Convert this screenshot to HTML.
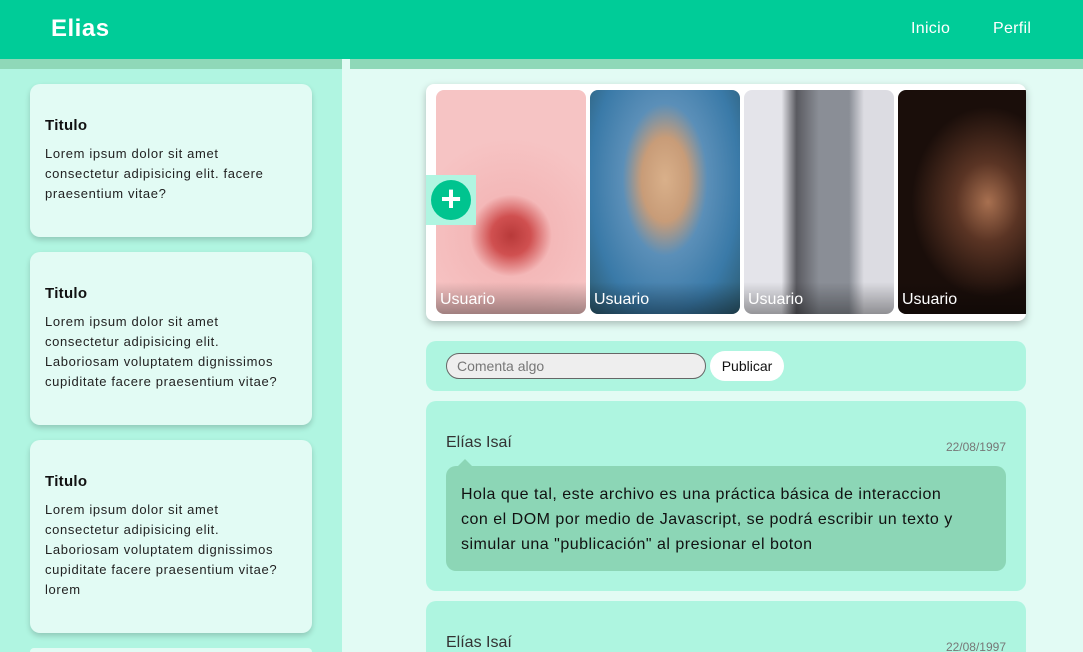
<!DOCTYPE html>
<html style="height:652px;overflow:hidden"><head><meta charset="utf-8"><style>
*{margin:0;padding:0;box-sizing:border-box}
body{width:1083px;height:652px;overflow:hidden;background:#e2fbf4;font-family:"Liberation Sans",sans-serif;position:relative;color:#111}
.hdr{position:absolute;left:0;top:0;width:1083px;height:59px;background:#00cc98}
.logo{position:absolute;left:51px;top:15px;color:#fff;font-weight:bold;font-size:24px;letter-spacing:.5px}
.nav{position:absolute;top:20px;color:#fff;font-size:16px;letter-spacing:.3px}
.strip{position:absolute;top:59px;height:10px;background:#8fd8b8}
.side{position:absolute;left:0;top:69px;width:342px;height:583px;background:#b0f5e1}
.card{position:absolute;left:30px;width:282px;background:#e2fbf4;border-radius:10px;box-shadow:0 3px 6px rgba(0,0,0,.18);padding:0 15px}
.card h3{font-size:15px;font-weight:bold;margin-bottom:10px;letter-spacing:.3px}
.card p{font-size:13px;line-height:20px;color:#222;letter-spacing:.65px;white-space:nowrap}
.stories{position:absolute;left:426px;top:84px;width:600px;height:237px;background:#fff;border-radius:8px;box-shadow:0 3px 8px rgba(0,0,0,.25);overflow:hidden}
.st{position:absolute;top:6px;height:224px;width:150px;border-radius:8px;overflow:hidden}
.st span{position:absolute;left:0;right:0;bottom:0;height:32px;background:linear-gradient(transparent,rgba(0,0,0,.35));color:#fff;font-size:16px;padding:9px 4px 0}
.plus{position:absolute;left:0;top:91px;width:50px;height:50px;background:#b0f5e1}
.plus div{position:absolute;left:5px;top:5px;width:40px;height:40px;border-radius:50%;background:#00c48f;color:#fff;font-size:36px;line-height:38px;text-align:center;font-weight:bold}
.bar{position:absolute;left:426px;top:341px;width:600px;height:50px;background:#aef5e0;border-radius:10px}
.inp{position:absolute;left:20px;top:12px;width:260px;height:26px;border:1px solid #666;border-radius:13px;background:#eee;color:#777;font-size:14px;padding:4px 10px}
.btn{position:absolute;left:284px;top:10px;width:74px;height:30px;border-radius:15px;background:#fff;font-size:14px;text-align:center;line-height:30px}
.post{position:absolute;left:426px;width:600px;background:#aef5e0;border-radius:10px}
.name{position:absolute;left:20px;top:33px;font-size:16px;color:#333}
.date{position:absolute;right:20px;top:39px;font-size:12px;color:#777}
.bub{position:absolute;left:20px;top:65px;width:560px;height:105px;background:#8cd6b6;border-radius:10px;padding:16px 15px;font-size:16px;line-height:25px;color:#111;letter-spacing:.5px;white-space:nowrap}
.bub:before{content:"";position:absolute;left:12px;top:-7px;border:7px solid transparent;border-top:0;border-bottom-color:#8cd6b6}
</style></head><body>
<div class="hdr"><div class="logo">Elias</div><div class="nav" style="left:911px">Inicio</div><div class="nav" style="left:993px">Perfil</div></div>
<div class="strip" style="left:0;width:342px"></div>
<div class="strip" style="left:350px;width:733px"></div>
<div class="side"></div>
<div class="card" style="top:84px;height:153px;padding-top:33px"><h3>Titulo</h3><p>Lorem ipsum dolor sit amet<br>consectetur adipisicing elit. facere<br>praesentium vitae?</p></div>
<div class="card" style="top:252px;height:173px;padding-top:33px"><h3>Titulo</h3><p>Lorem ipsum dolor sit amet<br>consectetur adipisicing elit.<br>Laboriosam voluptatem dignissimos<br>cupiditate facere praesentium vitae?</p></div>
<div class="card" style="top:440px;height:193px;padding-top:33px"><h3>Titulo</h3><p>Lorem ipsum dolor sit amet<br>consectetur adipisicing elit.<br>Laboriosam voluptatem dignissimos<br>cupiditate facere praesentium vitae?<br>lorem</p></div>
<div class="card" style="top:648px;height:4px;border-radius:10px 10px 0 0;box-shadow:none"></div>
<div class="stories">
<div class="st" style="left:10px;background:radial-gradient(circle at 50% 65%,#b83a3a 0,#d05050 12%,#f4b8b8 25%,#f6c4c4 60%)"><span>Usuario</span></div>
<div class="st" style="left:164px;background:radial-gradient(ellipse at 50% 40%,#d9b08a 0,#c89c78 22%,#5b8fb8 40%,#3a7aa8 70%,#2c5a6e 100%)"><span>Usuario</span></div>
<div class="st" style="left:318px;background:linear-gradient(90deg,#e4e4ea 0,#e4e4ea 25%,#5a5a60 35%,#8a8e96 50%,#8a8e96 70%,#dcdce2 80%)"><span>Usuario</span></div>
<div class="st" style="left:472px;width:150px;background:radial-gradient(ellipse at 60% 50%,#a87050 0,#5a3424 25%,#1a0e0a 60%)"><span>Usuario</span></div>
<div class="plus"><div>+</div></div>
</div>
<div class="bar"><div class="inp">Comenta algo</div><div class="btn">Publicar</div></div>
<div class="post" style="top:401px;height:190px"><div class="name">Elías Isaí</div><div class="date">22/08/1997</div><div class="bub">Hola que tal, este archivo es una práctica básica de interaccion<br>con el DOM por medio de Javascript, se podrá escribir un texto y<br>simular una "publicación" al presionar el boton</div></div>
<div class="post" style="top:601px;height:51px;border-radius:10px 10px 0 0"><div class="name">Elías Isaí</div><div class="date">22/08/1997</div></div>
</body></html>
